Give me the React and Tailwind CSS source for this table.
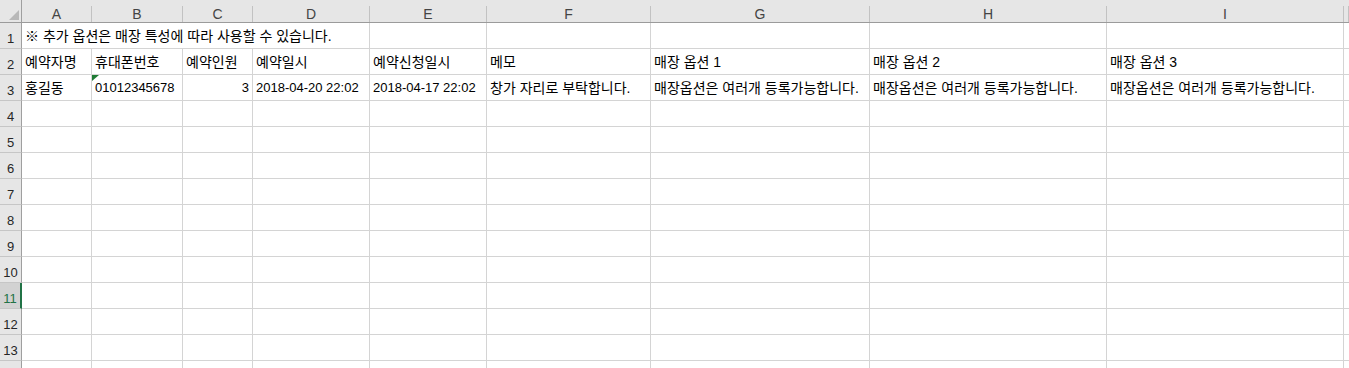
const COLS = ['A', 'B', 'C', 'D', 'E', 'F', 'G', 'H', 'I', ''];

const gridCols =
  'grid grid-cols-[22px_70px_91px_70px_117px_117px_164px_219px_237px_237px_1fr]';

const font = { fontFamily: '"Liberation Sans", "Noto Sans CJK KR", Arial, sans-serif' };

const row2 = ['예약자명', '휴대폰번호', '예약인원', '예약일시', '예약신청일시', '메모', '매장 옵션 1', '매장 옵션 2', '매장 옵션 3', ''];

const row3 = [
  { v: '홍길동' },
  { v: '01012345678', flag: true, num: true },
  { v: '3', right: true, num: true },
  { v: '2018-04-20 22:02', num: true },
  { v: '2018-04-17 22:02', num: true },
  { v: '창가 자리로 부탁합니다.' },
  { v: '매장옵션은 여러개 등록가능합니다.' },
  { v: '매장옵션은 여러개 등록가능합니다.' },
  { v: '매장옵션은 여러개 등록가능합니다.' },
  { v: '' },
];

function RowHead({ n, active }) {
  return (
    <div
      className={
        active
          ? 'h-[26px] bg-[#d2d2d2] border-b border-[#c6c6c6] border-r-2 border-r-[#217346] flex items-end justify-center pb-[3px] text-[13px] text-[#217346]'
          : 'h-[26px] bg-[#e6e6e6] border-b border-[#c6c6c6] border-r border-r-[#9f9f9f] flex items-end justify-center pb-[3px] text-[13px] text-[#262626]'
      }
    >
      {n}
    </div>
  );
}

function Cell({ children, right, num, className = '' }) {
  return (
    <div
      className={`h-[26px] border-r border-b border-[#d4d4d4] flex items-center px-[3px] whitespace-nowrap overflow-hidden text-black ${
        num ? 'text-[13px]' : 'text-[14px] pt-[1px]'
      } ${right ? 'justify-end' : ''} ${className}`}
    >
      {children}
    </div>
  );
}

function EmptyRow({ n, active }) {
  return (
    <div className={gridCols}>
      <RowHead n={n} active={active} />
      {COLS.map((c, i) => (
        <Cell key={i} />
      ))}
    </div>
  );
}

export default function App() {
  return (
    <div className="w-[1349px] h-[368px] overflow-hidden bg-white leading-none" style={font}>
      {/* column headers */}
      <div className={gridCols}>
        <div className="h-[23px] bg-[#e6e6e6] border-b border-[#9b9b9b] border-r border-r-[#9f9f9f] relative">
          <svg className="absolute right-[2px] bottom-[2px]" width="10" height="10" viewBox="0 0 10 10">
            <polygon points="10,0 10,10 0,10" fill="#b8b8b8" />
          </svg>
        </div>
        {COLS.map((c, i) => (
          <div key={i} className="h-[23px] bg-[#e6e6e6] border-b border-[#9b9b9b] flex items-end">
            <div className="h-[16px] w-full border-r border-[#c2c2c2] flex items-center justify-center text-[#444] text-[14px]">
              {c}
            </div>
          </div>
        ))}
      </div>

      {/* row 1 */}
      <div className={gridCols}>
        <RowHead n={1} />
        <Cell className="col-span-4">※ 추가 옵션은 매장 특성에 따라 사용할 수 있습니다.</Cell>
        {COLS.slice(4).map((c, i) => (
          <Cell key={i} />
        ))}
      </div>

      {/* row 2 */}
      <div className={gridCols}>
        <RowHead n={2} />
        {row2.map((v, i) => (
          <Cell key={i}>{v}</Cell>
        ))}
      </div>

      {/* row 3 */}
      <div className={gridCols}>
        <RowHead n={3} />
        {row3.map((c, i) => (
          <Cell key={i} right={c.right} num={c.num} className={c.flag ? 'relative' : ''}>
            {c.flag && (
              <svg className="absolute left-0 top-0" width="7" height="6" viewBox="0 0 7 6">
                <polygon points="0,0 7,0 0,6" fill="#1e7b34" />
              </svg>
            )}
            {c.v}
          </Cell>
        ))}
      </div>

      {[4, 5, 6, 7, 8, 9, 10, 11, 12, 13].map((n) => (
        <EmptyRow key={n} n={n} active={n === 11} />
      ))}
      <EmptyRow n="" />
    </div>
  );
}
